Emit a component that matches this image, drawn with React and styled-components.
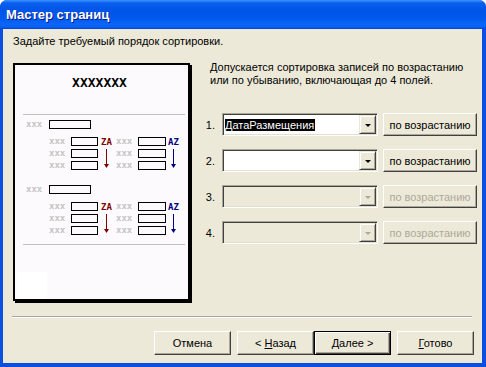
import React from 'react';
import styled, { createGlobalStyle } from 'styled-components';

const GlobalStyle = createGlobalStyle`
  html, body {
    margin: 0;
    padding: 0;
    background: #ffffff;
    overflow: hidden;
  }
`;

const Window = styled.div`
  width: 486px;
  height: 367px;
  box-sizing: border-box;
  display: flex;
  flex-direction: column;
  border-radius: 7px 7px 0 0;
  background: #0a4fe0;
  overflow: hidden;
  font-family: "Liberation Sans", Arial, sans-serif;
  font-size: 11px;
  color: #000;
`;

const TitleBar = styled.div`
  height: 29px;
  flex: none;
  display: flex;
  align-items: center;
  padding-left: 6px;
  padding-bottom: 1px;
  box-sizing: border-box;
  background: linear-gradient(
    180deg,
    #3b93ff 0px,
    #0a5fef 3px,
    #0055e6 10px,
    #0058ee 18px,
    #0a66f8 24px,
    #0b60f2 27px,
    #0040d0 29px
  );
`;

const Title = styled.span`
  color: #fff;
  font-weight: bold;
  font-size: 13px;
  text-shadow: 1px 1px 0 #0a1a8a;
`;

const Client = styled.div`
  flex: 1;
  margin: 0 4px 4px 3px;
  background: #ece9d8;
  display: flex;
  flex-direction: column;
  padding: 5px 8px 8px 10px;
  box-sizing: border-box;
`;

const Subtitle = styled.div`
  line-height: 14px;
  height: 14px;
`;

const Main = styled.div`
  display: flex;
  margin-top: 15px;
  flex: 1;
`;

const Preview = styled.div`
  width: 177px;
  height: 238px;
  box-sizing: border-box;
  border: 2px solid #000;
  box-shadow: 2px 2px 0 #000;
  background: #fdfafd;
  flex: none;
`;

const Options = styled.div`
  display: flex;
  flex-direction: column;
  margin-left: 15px;
  margin-top: -2px;
`;

const Hint = styled.div`
  padding-left: 5px;
  line-height: 13px;
  margin-bottom: 26px;
`;

const SortList = styled.div`
  display: flex;
  flex-direction: column;
  gap: 13px;
`;

const SortRow = styled.div`
  display: flex;
  align-items: center;
  height: 23px;
`;

const Num = styled.span`
  width: 10px;
  text-align: right;
  margin-right: 7px;
`;

const Combo = styled.div`
  width: 156px;
  height: 23px;
  box-sizing: border-box;
  display: flex;
  border: 1px solid;
  border-color: #aca899 #fff #fff #aca899;
  box-shadow: inset 1px 1px #404040, inset -1px -1px #e2dfcf;
  padding: 1px;
  background: ${p => (p.disabled ? '#ece9d8' : '#ffffff')};
`;

const ComboText = styled.div`
  flex: 1;
  display: flex;
  align-items: center;
  padding-left: 1px;
`;

const Selected = styled.span`
  background: #000;
  color: #fff;
  line-height: 12px;
  padding-right: 1px;
`;

const DropButton = styled.div`
  width: 17px;
  box-sizing: border-box;
  border: 1px solid;
  border-color: #ece9d8 #404040 #404040 #ece9d8;
  box-shadow: inset 1px 1px #fff, inset -1px -1px #aca899;
  background: #ece9d8;
  display: flex;
  align-items: center;
  justify-content: center;

  &::after {
    content: '';
    border-left: 3px solid transparent;
    border-right: 3px solid transparent;
    border-top: 3px solid ${p => (p.disabled ? '#aca899' : '#000')};
    margin-top: 1px;
  }
`;

const Button = styled.button`
  width: ${p => p.w || 77}px;
  height: ${p => p.h || 24}px;
  box-sizing: border-box;
  margin: 0;
  padding: 0;
  font-family: inherit;
  font-size: 11px;
  color: ${p => (p.disabled ? '#aca899' : '#000')};
  background: #ece9d8;
  border: 1px solid;
  border-color: #fff #404040 #404040 #fff;
  box-shadow: inset -1px -1px #aca899;
  border-radius: 0;

  ${p =>
    p.primary &&
    `
    border: 1px solid #000;
    box-shadow: inset 1px 1px #fff, inset -1px -1px #404040, inset -2px -2px #aca899;
  `}
`;

const SortButton = styled(Button)`
  margin-left: 5px;
`;

const Separator = styled.div`
  height: 1px;
  border-top: 1px solid #aca899;
  border-bottom: 1px solid #fff;
  height: 0;
  margin: 0 2px 13px -1px;
`;

const Footer = styled.div`
  display: flex;
  justify-content: flex-end;
`;

const Gap = styled.div`
  width: ${p => p.w}px;
`;

const PreviewText = styled.text`
  font-family: "DejaVu Sans Mono", monospace;
  font-weight: bold;
`;

const Arrow = ({ x, y1, y2, color }) => (
  <g>
    <line x1={x + 0.5} y1={y1} x2={x + 0.5} y2={y2 - 3} stroke={color} strokeWidth="1" />
    <polygon points={`${x - 2},${y2 - 4} ${x + 3},${y2 - 4} ${x + 0.5},${y2}`} fill={color} />
  </g>
);

const Box = ({ x, y, w }) => (
  <rect x={x + 0.5} y={y + 0.5} width={w - 1} height={8} fill="none" stroke="#000" strokeWidth="1" />
);

const Xxx = ({ x, y }) => (
  <PreviewText x={x} y={y} fontSize="9" fill="#c4c4c4">xxx</PreviewText>
);

const Group = ({ gy }) => {
  const rows = [gy + 17, gy + 29, gy + 41];
  return (
    <g>
      <Xxx x={11} y={gy + 7} />
      <Box x={34} y={gy} w={42} />
      {rows.map(r => (
        <g key={r}>
          <Xxx x={34} y={r + 7} />
          <Box x={56} y={r} w={27} />
          <Xxx x={101} y={r + 7} />
          <Box x={123} y={r} w={28} />
        </g>
      ))}
      <PreviewText x={86} y={gy + 25} fontSize="9" fill="#800000">ZA</PreviewText>
      <Arrow x={91} y1={gy + 29} y2={gy + 48} color="#800000" />
      <PreviewText x={153} y={gy + 25} fontSize="9" fill="#000080">AZ</PreviewText>
      <Arrow x={158} y1={gy + 29} y2={gy + 48} color="#000080" />
    </g>
  );
};

const ReportPicture = () => (
  <svg width="173" height="234" viewBox="0 0 173 234">
    <PreviewText x={84.5} y={22} fontSize="13" textAnchor="middle" fill="#000">XXXXXXX</PreviewText>
    <line x1="8" y1="49.5" x2="170" y2="49.5" stroke="#c0c0c0" />
    <Group gy={55} />
    <Group gy={120} />
    <line x1="8" y1="179.5" x2="170" y2="179.5" stroke="#c0c0c0" />
    <rect x="2" y="207" width="30" height="27" fill="#ffffff" />
  </svg>
);

const sorts = [
  { n: '1.', value: 'ДатаРазмещения', disabled: false },
  { n: '2.', value: '', disabled: false },
  { n: '3.', value: '', disabled: true },
  { n: '4.', value: '', disabled: true },
];

const App = () => (
  <>
    <GlobalStyle />
    <Window>
      <TitleBar>
        <Title>Мастер страниц</Title>
      </TitleBar>
      <Client>
        <Subtitle>Задайте требуемый порядок сортировки.</Subtitle>
        <Main>
          <Preview>
            <ReportPicture />
          </Preview>
          <Options>
            <Hint>
              Допускается сортировка записей по возрастанию
              <br />
              или по убыванию, включающая до 4 полей.
            </Hint>
            <SortList>
              {sorts.map(s => (
                <SortRow key={s.n}>
                  <Num>{s.n}</Num>
                  <Combo disabled={s.disabled}>
                    <ComboText>{s.value && <Selected>{s.value}</Selected>}</ComboText>
                    <DropButton disabled={s.disabled} />
                  </Combo>
                  <SortButton w={94} h={23} disabled={s.disabled}>по возрастанию</SortButton>
                </SortRow>
              ))}
            </SortList>
          </Options>
        </Main>
        <Separator />
        <Footer>
          <Button>Отмена</Button>
          <Gap w={6} />
          <Button>&lt; <u>Н</u>азад</Button>
          <Button primary><u>Д</u>алее &gt;</Button>
          <Gap w={6} />
          <Button><u>Г</u>отово</Button>
        </Footer>
      </Client>
    </Window>
  </>
);

export default App;
